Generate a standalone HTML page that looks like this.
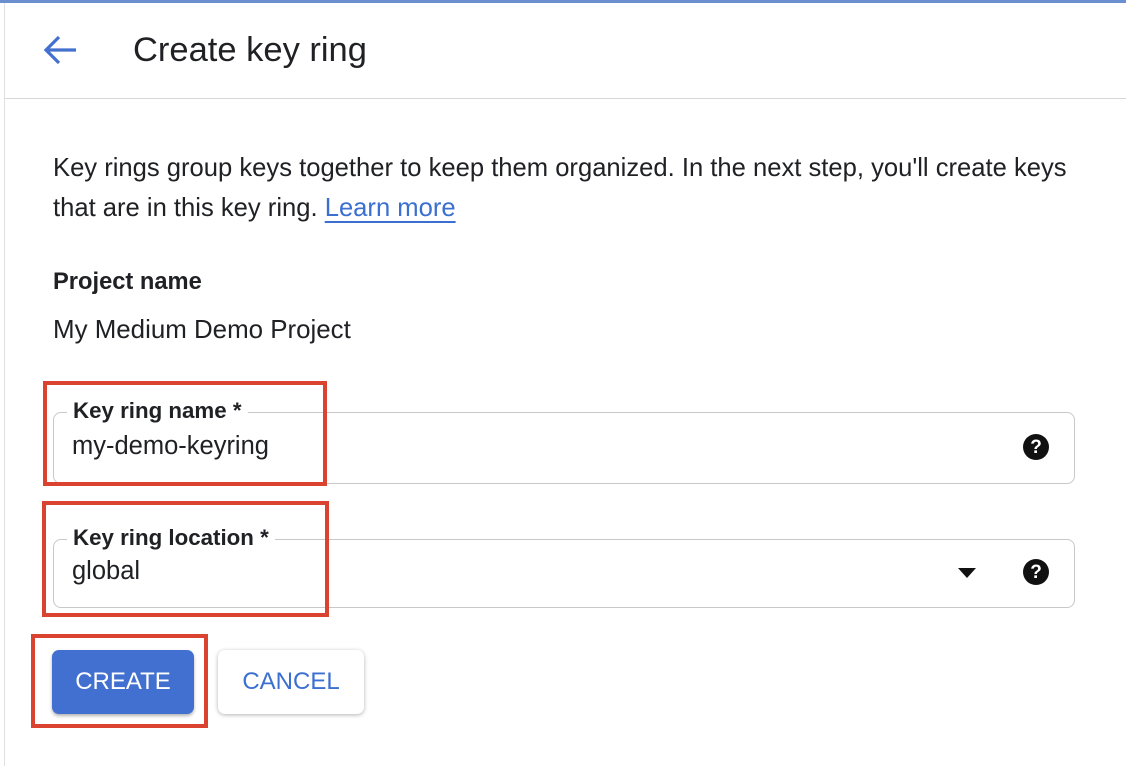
<!DOCTYPE html>
<html><head><style>
body{margin:0;width:1126px;height:766px;background:#fff;font-family:"Liberation Sans",Arial,sans-serif;position:relative;overflow:hidden;color:#202124}
.a{position:absolute}
.field{position:absolute;left:53px;width:1020px;border:1.5px solid #c8c8c8;border-radius:8px}
.lab{position:absolute;left:13px;top:-15px;background:#fff;padding:0 6px;font-weight:bold;font-size:22.3px;color:#202124}
.val{position:absolute;left:18px;font-size:25.5px}
.red{position:absolute;border:4px solid #d9432f;box-sizing:border-box}
.q{position:absolute;width:26px;height:26px;border-radius:50%;background:#111;color:#fff;font-weight:bold;font-size:19px;text-align:center;line-height:27px}
</style></head><body>
<div class="a" style="left:0;top:0;width:1126px;height:3px;background:#6a8fd0"></div>
<div class="a" style="left:4px;top:3px;width:1px;height:763px;background:#e0e0e0"></div>
<div class="a" style="left:4px;top:98px;width:1122px;height:1px;background:#d8d8d8"></div>
<svg class="a" style="left:42px;top:33px" width="36" height="34" viewBox="0 0 36 34"><path d="M34 17H5M17 4L4 17l13 13" stroke="#4470cf" stroke-width="3.2" fill="none"/></svg>
<div class="a" style="left:133px;top:31px;font-size:34.5px;color:#202124">Create key ring</div>
<div class="a" style="left:53px;top:148px;font-size:25.6px;line-height:40px;width:1040px">Key rings group keys together to keep them organized. In the next step, you'll create keys that are in this key ring. <span style="color:#3b6fd0;text-decoration:underline;text-underline-offset:5px">Learn more</span></div>
<div class="a" style="left:53px;top:269px;font-size:23.7px;font-weight:bold">Project name</div>
<div class="a" style="left:53px;top:316px;font-size:25.9px">My Medium Demo Project</div>
<div class="field" style="top:412px;height:70px"><span class="lab">Key ring name *</span><span class="val" style="top:19px">my-demo-keyring</span><div class="q" style="left:969px;top:21px">?</div></div>
<div class="field" style="top:539px;height:67px"><span class="lab">Key ring location *</span><span class="val" style="top:17px">global</span>
<div class="a" style="left:904px;top:28px;width:0;height:0;border-left:9px solid transparent;border-right:9px solid transparent;border-top:10px solid #111"></div>
<div class="q" style="left:969px;top:19px">?</div></div>
<div class="a" style="left:52px;top:650px;width:142px;height:64px;background:#4270d0;border-radius:7px;box-shadow:0 2px 3px rgba(0,0,0,.3);color:#fff;font-size:24px;text-align:center;line-height:64px">CREATE</div>
<div class="a" style="left:218px;top:650px;width:146px;height:64px;background:#fff;border-radius:7px;box-shadow:0 1px 4px rgba(0,0,0,.3);color:#3b6fd0;font-size:24px;text-align:center;line-height:64px">CANCEL</div>
<div class="red" style="left:43px;top:381px;width:284px;height:105px"></div>
<div class="red" style="left:42px;top:501px;width:287px;height:116px"></div>
<div class="red" style="left:31px;top:634px;width:177px;height:94px"></div>
</body></html>
